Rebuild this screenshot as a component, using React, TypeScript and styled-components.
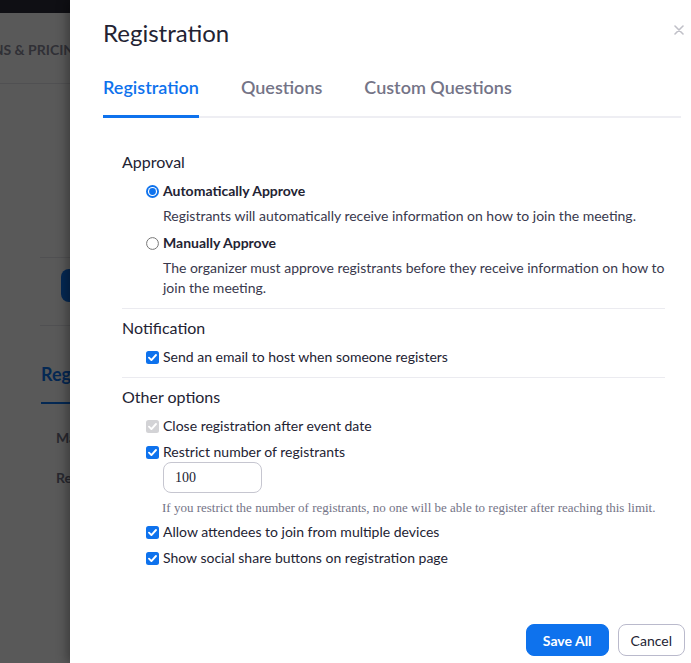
import styled, { createGlobalStyle } from "styled-components";

const GlobalStyle = createGlobalStyle`
  html, body {
    margin: 0;
    padding: 0;
  }
  body {
    font-family: Lato, "Open Sans", sans-serif;
    background: #fff;
  }
  * {
    box-sizing: border-box;
  }
`;

const BLUE = "#0e72ed";

/* background page */

const Page = styled.div`
  position: relative;
  width: 691px;
  height: 663px;
  overflow: hidden;
  background: #fff;
`;

const TopBar = styled.div`
  height: 13px;
  background: #2c2b3b;
`;

const NavRow = styled.div`
  height: 71px;
  display: flex;
  align-items: center;
  padding-top: 3px;
  border-bottom: 1px solid #e4e4ec;
`;

const NavLink = styled.span`
  margin-left: -33px;
  font-size: 14px;
  font-weight: 700;
  color: #8a8a9a;
  white-space: nowrap;
`;

const PageBody = styled.div`
  margin-left: 40px;
`;

const Blank = styled.div`
  height: 174px;
  border-bottom: 1px solid #e4e4ec;
`;

const ActionRow = styled.div`
  height: 68px;
  padding: 11px 0 0 21px;
  border-bottom: 1px solid #e4e4ec;
`;

const CreateButton = styled.div`
  width: 140px;
  height: 33px;
  border-radius: 8px;
  background: ${BLUE};
`;

const PageTabs = styled.div`
  display: flex;
  margin-top: 37px;
`;

const PageTab = styled.div`
  margin-left: 1px;
  padding-bottom: 17px;
  font-size: 18px;
  line-height: 22px;
  font-weight: 700;
  color: ${BLUE};
  border-bottom: 2px solid ${BLUE};
`;

const PageItems = styled.div`
  margin-top: 24px;
  display: flex;
  flex-direction: column;
`;

const PageItem = styled.div`
  height: 40px;
  padding-left: 16px;
  font-size: 14px;
  line-height: 20px;
  font-weight: 700;
  color: #747487;
  white-space: nowrap;
`;

const Overlay = styled.div`
  position: absolute;
  inset: 0;
  background: rgba(0, 0, 0, 0.65);
`;

/* drawer */

const Drawer = styled.div`
  position: absolute;
  top: 0;
  bottom: 0;
  left: 70px;
  right: 0;
  display: flex;
  flex-direction: column;
  background: #fff;
  box-shadow: -3px 0 10px rgba(0, 0, 0, 0.35);
`;

const Header = styled.div`
  display: flex;
  justify-content: space-between;
  align-items: flex-start;
  padding: 18px 7px 0 33px;
`;

const Title = styled.h2`
  margin: 0;
  font-size: 24px;
  line-height: 29px;
  font-weight: 400;
  color: #232333;
`;

const CloseButton = styled.button`
  margin-top: 7px;
  padding: 0;
  border: none;
  background: none;
  line-height: 0;
  cursor: pointer;
`;

const TabList = styled.div`
  display: flex;
  margin: 29px 10px 0 33px;
  border-bottom: 2px solid #eeeef3;
`;

const Tab = styled.div<{ $active?: boolean }>`
  margin-right: 42px;
  margin-bottom: -2px;
  padding-bottom: 17px;
  font-size: 18px;
  line-height: 22px;
  font-weight: 600;
  color: ${(p) => (p.$active ? BLUE : "#747487")};
  border-bottom: 3px solid ${(p) => (p.$active ? BLUE : "transparent")};
  white-space: nowrap;
`;

const Body = styled.div`
  flex: 1;
  padding: 25px 26px 0 52px;
`;

const Section = styled.section<{ $last?: boolean }>`
  padding: 9px 0 10px;
  border-bottom: ${(p) => (p.$last ? "none" : "1px solid #ebebf0")};
`;

const Heading = styled.h3`
  margin: 0 0 9px;
  font-size: 16px;
  line-height: 20px;
  font-weight: 400;
  color: #232333;
`;

const OptionList = styled.div<{ $gap: number }>`
  display: flex;
  flex-direction: column;
  gap: ${(p) => p.$gap}px;
`;

const OptionGroup = styled.div`
  display: flex;
  flex-direction: column;
`;

const OptionRow = styled.label<{ $bold?: boolean }>`
  display: flex;
  align-items: center;
  gap: 4px;
  padding-left: 24px;
  font-size: 14px;
  line-height: 20px;
  font-weight: ${(p) => (p.$bold ? 700 : 400)};
  color: #232333;
  white-space: nowrap;
`;

const Description = styled.p`
  margin: 5px 0 0 41px;
  font-size: 14px;
  line-height: 20px;
  color: #39394d;
  white-space: nowrap;
`;

const NumberInput = styled.input`
  width: 99px;
  height: 31px;
  margin-left: 41px;
  padding: 0 11px;
  border: 1px solid #c6c6d0;
  border-radius: 8px;
  font-family: "Liberation Serif", serif;
  font-size: 14px;
  color: #232333;
  outline: none;
`;

const Hint = styled.p`
  margin: 7px 0 0 40px;
  font-family: "Liberation Serif", serif;
  font-size: 13px;
  line-height: 16px;
  color: #747487;
  white-space: nowrap;
`;

const Footer = styled.div`
  display: flex;
  justify-content: flex-end;
  gap: 9px;
  padding: 0 6px 7px 0;
`;

const Button = styled.button<{ $primary?: boolean }>`
  height: 32px;
  padding: 0 ${(p) => (p.$primary ? 16 : 12)}px;
  border-radius: 8px;
  border: 1px solid ${(p) => (p.$primary ? BLUE : "#babacc")};
  background: ${(p) => (p.$primary ? BLUE : "#fff")};
  color: ${(p) => (p.$primary ? "#fff" : "#232333")};
  font-family: Lato, sans-serif;
  font-size: 14px;
  font-weight: ${(p) => (p.$primary ? 700 : 400)};
  cursor: pointer;
`;

const Radio = ({ checked }: { checked?: boolean }) => (
  <svg width="13" height="13" viewBox="0 0 13 13">
    {checked ? (
      <>
        <circle cx="6.5" cy="6.5" r="6.5" fill={BLUE} />
        <circle cx="6.5" cy="6.5" r="4.6" fill="#fff" />
        <circle cx="6.5" cy="6.5" r="3.4" fill={BLUE} />
      </>
    ) : (
      <circle cx="6.5" cy="6.5" r="5.9" fill="#fff" stroke="#767676" strokeWidth="1" />
    )}
  </svg>
);

const Checkbox = ({ disabled }: { disabled?: boolean }) => (
  <svg width="13" height="13" viewBox="0 0 13 13">
    <rect x="0" y="0" width="13" height="13" rx="2.5" fill={disabled ? "#d3d3d6" : BLUE} />
    <path d="M3 6.7 L5.4 9.1 L10 4" fill="none" stroke="#fff" strokeWidth="1.9" strokeLinecap="round" strokeLinejoin="round" />
  </svg>
);

export default function App() {
  return (
    <Page>
      <GlobalStyle />
      <TopBar />
      <NavRow>
        <NavLink>PLANS &amp; PRICING</NavLink>
      </NavRow>
      <PageBody>
        <Blank />
        <ActionRow>
          <CreateButton />
        </ActionRow>
        <PageTabs>
          <PageTab>Registration</PageTab>
        </PageTabs>
        <PageItems>
          <PageItem>Manual Approve</PageItem>
          <PageItem>Registrants</PageItem>
        </PageItems>
      </PageBody>
      <Overlay />

      <Drawer>
        <Header>
          <Title>Registration</Title>
          <CloseButton aria-label="Close">
            <svg width="10" height="10" viewBox="0 0 10 10">
              <path d="M1 1 L9 9 M9 1 L1 9" stroke="#c0c0c8" strokeWidth="1.6" strokeLinecap="round" />
            </svg>
          </CloseButton>
        </Header>

        <TabList>
          <Tab $active>Registration</Tab>
          <Tab>Questions</Tab>
          <Tab>Custom Questions</Tab>
        </TabList>

        <Body>
          <Section>
            <Heading>Approval</Heading>
            <OptionList $gap={7}>
              <OptionGroup>
                <OptionRow $bold>
                  <Radio checked />
                  Automatically Approve
                </OptionRow>
                <Description>Registrants will automatically receive information on how to join the meeting.</Description>
              </OptionGroup>
              <OptionGroup>
                <OptionRow $bold>
                  <Radio />
                  Manually Approve
                </OptionRow>
                <Description>
                  The organizer must approve registrants before they receive information on how to
                  <br />
                  join the meeting.
                </Description>
              </OptionGroup>
            </OptionList>
          </Section>

          <Section>
            <Heading>Notification</Heading>
            <OptionList $gap={6}>
              <OptionRow>
                <Checkbox />
                Send an email to host when someone registers
              </OptionRow>
            </OptionList>
          </Section>

          <Section $last>
            <Heading>Other options</Heading>
            <OptionList $gap={6}>
              <OptionRow>
                <Checkbox disabled />
                Close registration after event date
              </OptionRow>
              <OptionGroup>
                <OptionRow>
                  <Checkbox />
                  Restrict number of registrants
                </OptionRow>
                <NumberInput value="100" readOnly />
                <Hint>If you restrict the number of registrants, no one will be able to register after reaching this limit.</Hint>
              </OptionGroup>
              <OptionRow>
                <Checkbox />
                Allow attendees to join from multiple devices
              </OptionRow>
              <OptionRow>
                <Checkbox />
                Show social share buttons on registration page
              </OptionRow>
            </OptionList>
          </Section>
        </Body>

        <Footer>
          <Button $primary>Save All</Button>
          <Button>Cancel</Button>
        </Footer>
      </Drawer>
    </Page>
  );
}
